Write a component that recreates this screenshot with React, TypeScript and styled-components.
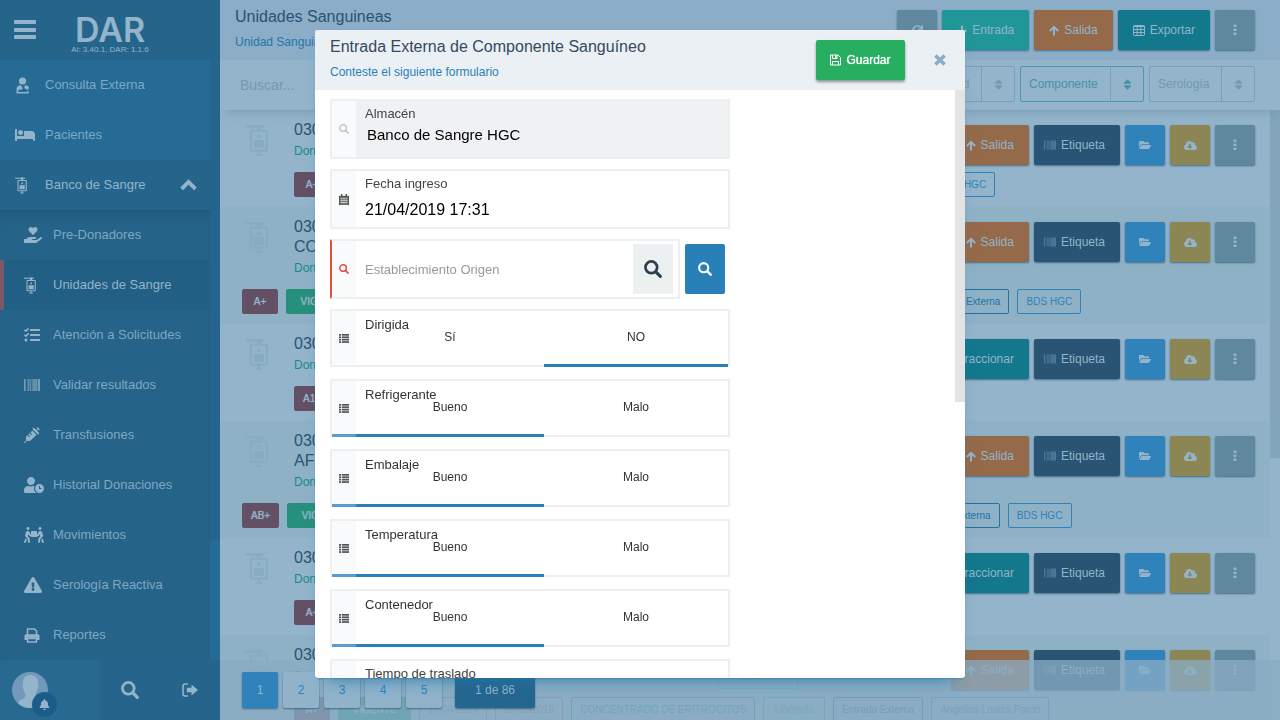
import React from "react";
import styled, { createGlobalStyle, css } from "styled-components";
import {
  FaBarcode,
  FaBed,
  FaBell,
  FaCloudDownloadAlt,
  FaExclamationTriangle,
  FaFolderOpen,
  FaHandHoldingHeart,
  FaPeopleCarry,
  FaRedo,
  FaSort,
  FaSyringe,
  FaTasks,
  FaUserClock,
} from "react-icons/fa";

const color = {
  bright: "#93b4ca",
  dim: "#7ea8c4",
  side: "#26658b",
  menu: "#256b96",
  submenu: "#256388",
  active: "#225f84",
  header: "#8badc7",
  rowEven: "#8eb1c6",
  navy: "#295473",
  blue: "#2f82ba",
  orange: "#956a4a",
  teal: "#13788c",
  turquoise: "#209699",
  gold: "#8c8554",
  slate: "#5f889f",
  wine: "#635064",
  green: "#27907c",
  field: "#ecf0f1",
  primary: "#2980b9",
};

const GlobalStyle = createGlobalStyle`
  *, *::before, *::after { box-sizing: border-box; }
  body { margin: 0; overflow: hidden; background: ${color.bright}; }
  body, button, input, select {
    font-family: "Liberation Sans", Arial, sans-serif;
  }
  button { border: 0; padding: 0; cursor: pointer; }
  h1, h2, p { margin: 0; font-weight: 400; }
  a { text-decoration: none; color: inherit; }
  svg { display: block; flex: none; }
`;

/* ---------- drawn icons ---------- */

const BarsIcon = () => (
  <svg width="24" height="20" viewBox="0 0 24 20" fill="currentColor">
    <rect x="1" y="0" width="22" height="4" rx="1" />
    <rect x="1" y="8" width="22" height="4" rx="1" />
    <rect x="1" y="15" width="22" height="4" rx="1" />
  </svg>
);

const SearchIcon = ({ size }: { size: number }) => (
  <svg width={size} height={size} viewBox="0 0 16 16" fill="none" stroke="currentColor">
    <circle cx="6.500" cy="6.500" r="5.200" strokeWidth="2.400" />
    <path d="M10.800 10.800L14.500 14.500" strokeWidth="2.800" strokeLinecap="round" />
  </svg>
);

const ArrowIcon = ({ down }: { down?: boolean }) => (
  <svg width="10" height="11" viewBox="0 0 10 11" fill="none" stroke="currentColor" strokeWidth="2">
    {down ? <path d="M5 0.500V9M0.800 5L5 9.200L9.200 5" /> : <path d="M5 10.500V2M0.800 6L5 1.800L9.200 6" />}
  </svg>
);

const ChevronIcon = () => (
  <svg width="17" height="12" viewBox="0 0 17 12" fill="none" stroke="currentColor" strokeWidth="3.800">
    <path d="M1.600 9.800L8.500 3L15.400 9.800" />
  </svg>
);

const CloseIcon = () => (
  <svg width="12" height="12" viewBox="0 0 12 12" stroke="currentColor" strokeWidth="3.600">
    <path d="M1.400 1.400L10.600 10.600M10.600 1.400L1.400 10.600" />
  </svg>
);

const PrintIcon = () => (
  <svg width="16" height="15" viewBox="0 0 16 15">
    <g fill="none" stroke="currentColor" strokeWidth="1.500">
      <path d="M3.500 7V1H10.500L12.500 3V7" />
      <path d="M3.500 10.500H12.500V14H3.500Z" />
    </g>
    <path
      fill="currentColor"
      d="M2 6.200H14Q15.500 6.200 15.500 7.700V12H12.500V9.700H3.500V12H0.500V7.700Q0.500 6.200 2 6.200Z"
    />
  </svg>
);

const DoctorIcon = () => (
  <svg width="16" height="17" viewBox="0 0 16 17" fill="currentColor">
    <circle cx="7.500" cy="4" r="3.600" />
    <path d="M4.500 8.200C2.600 8.800 1.500 10.400 1.500 12.500V16.500H13.500V13.500L11.500 15H3.300V12.800H6.200L8 11.200L5.800 8.600Z" />
    <path d="M9.500 8.600H11.200C13 8.600 14 9.800 14 11.400L12.200 12.800L9.500 11.200Z" />
  </svg>
);

const BagIcon = ({ size = 17 }: { size?: number }) => (
  <svg width={(size * 24) / 34} height={size} viewBox="0 0 24 34">
    <g fill="none" stroke="currentColor" strokeWidth="2.200">
      <path d="M0 2.500H20" />
      <rect x="6" y="7" width="16.500" height="20.500" rx="1" />
      <path d="M14.200 28V32M10.800 32H17.600" />
    </g>
    <path fill="currentColor" d="M9 16.500H19.500V24.500H9ZM12.600 11H15.900V14.500H12.600ZM12 1H16.500V6H12Z" />
  </svg>
);

const SignOutIcon = () => (
  <svg width="16" height="14" viewBox="0 0 16 14">
    <path d="M6 1H3.200Q1 1 1 3.200V10.800Q1 13 3.200 13H6" fill="none" stroke="currentColor" strokeWidth="1.600" />
    <path d="M4.800 4.700H9.500V1.500L16 7L9.500 12.500V9.300H4.800Z" fill="currentColor" />
  </svg>
);

const TableIcon = () => (
  <svg width="12" height="11" viewBox="0 0 12 11" fill="none" stroke="currentColor">
    <rect x="0.500" y="0.500" width="11" height="10" rx="1" />
    <path d="M0 1.500H12M0 4.500H12M0 7.500H12M4.200 1V10.500M7.800 1V10.500" />
  </svg>
);

const DotsIcon = () => (
  <svg width="4" height="12" viewBox="0 0 4 12" fill="currentColor">
    <rect x="0.500" y="0.500" width="3" height="2.600" rx="0.500" />
    <rect x="0.500" y="4.500" width="3" height="2.600" rx="0.500" />
    <rect x="0.500" y="8.500" width="3" height="2.600" rx="0.500" />
  </svg>
);

const SaveIcon = () => (
  <svg width="11" height="12" viewBox="0 0 11 12" fill="none" stroke="currentColor">
    <path d="M0.500 1H8L10.500 3.500V11H0.500Z" />
    <path d="M2.500 1V4.500H7V1M2.500 11V7.500H8.500V11" />
    <path d="M5 1.500H6.500V4H5Z" fill="currentColor" stroke="none" />
  </svg>
);

const CalendarIcon = () => (
  <svg width="10" height="11" viewBox="0 0 11 12">
    <path fill="currentColor" d="M0 2H11V12H0Z" />
    <path stroke="currentColor" strokeWidth="1.600" d="M3 0V3M8 0V3" />
    <path
      stroke="#f8fafc"
      strokeWidth="0.600"
      d="M1 4.500H10M1 7H10M1 9.300H10M3.200 4.500V11.300M5.500 4.500V11.300M7.800 4.500V11.300"
    />
  </svg>
);

const ListIcon = () => (
  <svg width="10" height="9" viewBox="0 0 10 9" fill="currentColor">
    {[0, 2.4, 4.8, 7.2].map((y) => (
      <React.Fragment key={y}>
        <rect x="0" y={y} width="2" height="1.700" />
        <rect x="2.800" y={y} width="7.200" height="1.700" />
      </React.Fragment>
    ))}
  </svg>
);

const AvatarIcon = () => (
  <svg width="36" height="36" viewBox="0 0 36 36">
    <circle cx="18" cy="18" r="18" fill="#7399ba" />
    <path
      fill={color.bright}
      d="M18.500 3C13.500 3 10.800 6.300 11 11C11 13 10 14 11.200 16.500C11.800 19.500 13 20.500 13.500 22.500C13.500 26 12 26.500 8.500 28C6.500 29 6 31 6 31.500A18 18 0 0 0 30 31.500C29.500 28.500 27 28 25 27C23 26 23 24 23.500 22C25 20 25.200 18 25.800 16.500C27 14 26 13 26 11C26.200 6.300 23.500 3 18.500 3Z"
    />
  </svg>
);

/* ---------- page frame ---------- */

const Page = styled.div`
  display: grid;
  grid-template-columns: 220px minmax(0, 1fr);
  grid-template-rows: minmax(0, 1fr);
  height: 100vh;
`;

/* ---------- sidebar ---------- */

const Sidebar = styled.aside`
  display: flex;
  flex-direction: column;
  min-height: 0;
  background: ${color.side};
  color: ${color.bright};
`;

const Brand = styled.div`
  display: grid;
  grid-template-columns: 60px 100px 1fr;
  height: 60px;
  flex: none;
`;

const MenuButton = styled.button`
  background: none;
  color: inherit;
  padding: 20px 0 0 13px;
  display: flex;
  align-items: flex-start;
`;

const Logo = styled.div`
  padding-top: 14px;
  text-align: center;
`;

const LogoName = styled.div`
  font-family: Inter, "Liberation Sans", sans-serif;
  font-size: 34px;
  font-weight: 600;
  line-height: 32px;
`;

const LogoVersion = styled.div`
  font-size: 8px;
  line-height: 8px;
  white-space: nowrap;
`;

const NavArea = styled.div`
  flex: 1;
  min-height: 0;
  display: grid;
  grid-template-columns: minmax(0, 1fr) 10px;
  grid-template-rows: minmax(0, 1fr);
  overflow: hidden;
`;

const NavTrack = styled.div`
  background: ${color.menu};
`;

const NavThumb = styled.div`
  height: 80%;
  background: ${color.side};
`;

const Nav = styled.nav`
  background: ${color.menu};
`;

const NavLink = styled.a<{ $open?: boolean }>`
  display: flex;
  align-items: center;
  height: 50px;
  padding: 0 13px;
  font-size: 13px;
  color: ${(p) => (p.$open ? color.bright : color.dim)};
  background: ${(p) => (p.$open ? color.side : "transparent")};
`;

const NavIcon = styled.span`
  width: 32px;
  padding-left: 2px;
  color: ${color.bright};
`;

const NavText = styled.span`
  flex: 1;
  padding-bottom: 2px;
`;

const SubMenu = styled.div`
  background: ${color.submenu};
  box-shadow: inset 0 14px 14px -14px #1f5070;
`;

const SubLink = styled(NavLink)<{ $active?: boolean }>`
  padding: 0 13px 0 20px;
  border-left: 4px solid ${(p) => (p.$active ? "#7a5868" : "transparent")};
  background: ${(p) => (p.$active ? color.active : "transparent")};
  color: ${(p) => (p.$active ? color.bright : color.dim)};
`;

const SubIcon = styled.span`
  width: 29px;
  color: ${color.bright};
`;

const UserBar = styled.div`
  display: grid;
  grid-template-columns: 100px 60px 60px;
  height: 60px;
  flex: none;
`;

const UserButton = styled.button`
  position: relative;
  background: #28698f;
  padding: 0 12px;
`;

const BellBadge = styled.span`
  position: absolute;
  left: 32px;
  top: 32px;
  display: grid;
  place-items: center;
  width: 25px;
  height: 25px;
  border-radius: 50%;
  background: #1b5c88;
  color: ${color.bright};
`;

const UserAction = styled.button`
  display: grid;
  place-items: center;
  background: none;
  color: ${color.bright};
`;

/* ---------- content ---------- */

const Content = styled.main`
  position: relative;
  display: flex;
  flex-direction: column;
  min-height: 0;
  overflow: hidden;
  background: ${color.bright};
`;

const PageHeader = styled.header`
  display: flex;
  justify-content: space-between;
  height: 60px;
  flex: none;
  padding: 0 25px 0 15px;
  background: ${color.header};
`;

const HeaderTitle = styled.h1`
  padding-top: 6px;
  font-size: 16px;
  line-height: 22px;
  color: ${color.navy};
`;

const HeaderSub = styled.p`
  padding-top: 5px;
  font-size: 12px;
  line-height: 18px;
  color: #2277aa;
`;

const Actions = styled.div<{ $top?: number }>`
  display: flex;
  justify-content: flex-end;
  align-items: flex-start;
  gap: 5px;
  padding-top: ${(p) => p.$top ?? 10}px;
`;

const Button = styled.button<{ $bg: string }>`
  display: flex;
  align-items: center;
  justify-content: center;
  gap: 5px;
  min-width: 40px;
  height: 40px;
  padding: 0 15px;
  border-radius: 2px;
  font-size: 12px;
  color: ${color.bright};
  background: ${(p) => p.$bg};
  box-shadow: 0 1px 2px rgba(40, 80, 110, 0.7);
`;

const LabelButton = styled(Button)`
  padding-left: 10px;
`;

const IconButton = styled(Button)`
  width: 40px;
  padding: 0;
`;

const FilterBar = styled.div`
  display: flex;
  align-items: flex-start;
  gap: 5px;
  height: 50px;
  flex: none;
  padding: 6px 25px 0 20px;
  box-shadow: 0 6px 10px -6px rgba(70, 115, 145, 0.5);
  z-index: 1;
`;

const SearchInput = styled.input`
  flex: 1;
  min-width: 0;
  height: 38px;
  padding: 0;
  border: 0;
  outline: 0;
  background: transparent;
  font-size: 14px;
  color: ${color.navy};
  &::placeholder {
    color: #7599af;
    opacity: 1;
  }
`;

const SelectBox = styled.div<{ $on?: boolean; $width: number }>`
  display: flex;
  width: ${(p) => p.$width}px;
  height: 36px;
  border: 1px solid ${(p) => (p.$on ? "#4b9aae" : "#78a0b6")};
  border-radius: 2px;
  color: ${(p) => (p.$on ? "#4593a8" : "#7299af")};
`;

const Select = styled.select`
  flex: 1;
  min-width: 0;
  padding: 0 0 0 8px;
  appearance: none;
  border: 0;
  outline: 0;
  background: transparent;
  font-size: 12px;
  color: inherit;
`;

const SelectArrow = styled.span`
  display: grid;
  place-items: center;
  width: 33px;
  border-left: 1px solid #78a0b6;
`;

const ListArea = styled.div`
  flex: 1;
  min-height: 0;
  display: grid;
  grid-template-columns: minmax(0, 1fr) 10px;
  grid-template-rows: minmax(0, 1fr);
  overflow: hidden;
`;

const ListThumb = styled.div`
  height: 57%;
  background: #83a5bb;
`;

const Rows = styled.div`
  min-width: 0;
`;

const Row = styled.article<{ $even: boolean }>`
  padding: 10px 15px 10px 22px;
  background: ${(p) => (p.$even ? color.rowEven : color.bright)};
`;

const RowTop = styled.div`
  display: grid;
  grid-template-columns: 52px minmax(0, 1fr) 80px 457px;
`;

const RowIcon = styled.div`
  padding: 4px 0 0 3px;
  color: #87abc1;
`;

const RowHeading = styled.div`
  padding-bottom: 3px;
`;

const RowTitle = styled.h2`
  font-size: 16px;
  line-height: 20px;
  color: ${color.navy};
  white-space: pre-line;
`;

const RowSub = styled.p`
  font-size: 12px;
  line-height: 22px;
  color: #17898f;
`;

const Amount = styled.div`
  height: 25px;
  margin-top: 19px;
  border: 1px solid #6b93b2;
  border-radius: 2px;
  font-size: 12px;
  line-height: 23px;
  text-align: center;
  color: #5d8aad;
`;

const Tags = styled.div<{ $indent: boolean }>`
  display: flex;
  gap: 8px;
  margin-top: 7px;
  padding-left: ${(p) => (p.$indent ? 52 : 0)}px;
`;

const Tag = styled.span<{ $tone: string; $fill?: boolean; $min?: number }>`
  flex: none;
  min-width: ${(p) => p.$min ?? 36}px;
  height: 25px;
  padding: 0 8px;
  border: 1px solid ${(p) => p.$tone};
  border-radius: 2px;
  font-size: 10px;
  line-height: 23px;
  text-align: center;
  white-space: nowrap;
  color: ${(p) => (p.$fill ? color.bright : p.$tone)};
  background: ${(p) => (p.$fill ? p.$tone : "transparent")};
  text-shadow: ${(p) => (p.$fill ? `0 0 1px ${color.bright}` : "none")};
`;

const Pager = styled.nav`
  position: absolute;
  left: 0;
  right: 0;
  bottom: 0;
  z-index: 2;
  display: flex;
  gap: 5px;
  height: 60px;
  padding: 12px 22px;
  background: rgba(138, 172, 196, 0.76);
`;

const PageButton = styled.button<{ $current?: boolean }>`
  width: 36px;
  height: 36px;
  border-radius: 2px;
  font-size: 12px;
  color: ${(p) => (p.$current ? color.bright : color.blue)};
  background: ${(p) => (p.$current ? color.blue : "#90b3ca")};
  box-shadow: 0 1px 2px rgba(40, 80, 110, 0.7);
`;

const PageStatus = styled.span`
  width: 80px;
  height: 36px;
  margin-left: 8px;
  border-radius: 2px;
  font-size: 12px;
  line-height: 36px;
  text-align: center;
  color: ${color.bright};
  background: #25668f;
  box-shadow: 0 1px 2px rgba(40, 80, 110, 0.7);
`;

/* ---------- dialog ---------- */

const Overlay = styled.div`
  position: fixed;
  inset: 0;
  z-index: 10;
  display: flex;
  justify-content: center;
  align-items: flex-start;
  padding-top: 30px;
`;

const Dialog = styled.section`
  display: flex;
  flex-direction: column;
  width: 100%;
  max-width: 650px;
  height: 90vh;
  border-radius: 3px;
  overflow: hidden;
  background: #fff;
  box-shadow: 0 12px 16px -12px #2277a6, 0 1px 1px rgba(60, 110, 150, 0.4);
`;

const DialogHeader = styled.header`
  display: flex;
  height: 60px;
  flex: none;
  padding: 0 10px 0 15px;
  background: #ebf0f5;
`;

const DialogHeading = styled.div`
  flex: 1;
`;

const DialogTitle = styled(HeaderTitle)`
  color: #34495e;
`;

const DialogSub = styled(HeaderSub)`
  color: ${color.primary};
`;

const SaveButton = styled(Button)`
  width: 89px;
  margin: 10px 20px 0 0;
  color: #fff;
  text-shadow: 0 0 1px #fff;
  box-shadow: 0 2px 3px rgba(0, 0, 0, 0.4);
`;

const CloseButton = styled.button`
  width: 30px;
  display: grid;
  place-items: center;
  background: none;
  color: #8aaeca;
`;

const DialogBody = styled.div`
  flex: 1;
  min-height: 0;
  display: grid;
  grid-template-columns: minmax(0, 1fr) 10px;
  grid-template-rows: minmax(0, 1fr);
  overflow: hidden;
`;

const DialogThumb = styled.div`
  height: 53%;
  background: #e3e3e3;
`;

const Form = styled.form`
  display: flex;
  flex-direction: column;
  gap: 10px;
  padding: 9px 15px;
`;

const Line = styled.div`
  display: flex;
  align-items: flex-start;
  gap: 5px;
  width: 100%;
  max-width: 400px;
  height: 60px;
  flex: none;
`;

const Field = styled.div<{ $locked?: boolean; $error?: boolean }>`
  flex: 1;
  display: flex;
  height: 60px;
  border: 2px solid ${color.field};
  ${(p) =>
    p.$error &&
    css`
      border-left-color: #e74c3c;
    `}
  background: ${(p) => (p.$locked ? "#f0f1f3" : "#fff")};
`;

const FieldIcon = styled.span<{ $tone?: string }>`
  display: grid;
  place-items: center;
  width: 24px;
  flex: none;
  background: #f8fafc;
  color: ${(p) => p.$tone ?? "#555"};
`;

const FieldMain = styled.div`
  flex: 1;
  min-width: 0;
  display: flex;
  flex-direction: column;
  padding: 3px 9px 0;
`;

const FieldLabel = styled.label`
  font-size: 13px;
  line-height: 20px;
  color: #444;
`;

const FieldInput = styled.input<{ $size?: number }>`
  width: 100%;
  height: ${(p) => (p.$size === 16 ? 32 : 20)}px;
  padding: 0;
  border: 0;
  outline: 0;
  background: transparent;
  font-size: ${(p) => p.$size ?? 15}px;
  color: #000;
`;

const LockedInput = styled(FieldInput)`
  padding-left: 2px;
`;

const LookupInput = styled(FieldInput)`
  flex: 1;
  min-width: 0;
  height: 56px;
  padding-left: 9px;
  &::placeholder {
    color: #999;
    opacity: 1;
  }
`;

const LookupButton = styled.button<{ $primary?: boolean }>`
  display: grid;
  place-items: center;
  width: 40px;
  height: 50px;
  flex: none;
  margin: ${(p) => (p.$primary ? "5px 5px 0 0" : "3px 5px 0 0")};
  border-radius: ${(p) => (p.$primary ? 2 : 0)}px;
  background: ${(p) => (p.$primary ? color.primary : color.field)};
  color: ${(p) => (p.$primary ? "#fff" : "#2c3e50")};
`;

const ChoiceSet = styled.fieldset`
  position: relative;
  flex: 1;
  display: grid;
  grid-template-columns: 24px 188px minmax(0, 1fr);
  height: 58px;
  min-width: 0;
  margin: 0;
  padding: 0;
  border: 2px solid ${color.field};
`;

const ChoiceName = styled.legend`
  position: absolute;
  left: 33px;
  top: 4px;
  padding: 0;
  font-size: 13px;
  line-height: 20px;
  color: #333;
`;

const ChoiceIcon = styled(FieldIcon)<{ $marked: boolean }>`
  height: 56px;
  padding-top: 2px;
  border-bottom: 3px solid ${(p) => (p.$marked ? "#5b9bcd" : "transparent")};
  background-clip: padding-box;
`;

const Choice = styled.label`
  height: 56px;
  padding-top: 17px;
  font-size: 12px;
  line-height: 18px;
  text-align: center;
  color: #333;
  border-bottom: 3px solid transparent;
  &:has(input:checked) {
    border-bottom-color: ${color.primary};
  }
`;

const HiddenRadio = styled.input`
  position: absolute;
  opacity: 0;
  margin: 0;
`;

/* ---------- data ---------- */

const submenu = [
  { text: "Pre-Donadores", icon: <FaHandHoldingHeart size={18} /> },
  { text: "Unidades de Sangre", icon: <BagIcon />, active: true },
  { text: "Atención a Solicitudes", icon: <FaTasks size={16} /> },
  { text: "Validar resultados", icon: <FaBarcode size={16} /> },
  { text: "Transfusiones", icon: <FaSyringe size={16} /> },
  { text: "Historial Donaciones", icon: <FaUserClock size={20} /> },
  { text: "Movimientos", icon: <FaPeopleCarry size={20} /> },
  { text: "Serología Reactiva", icon: <FaExclamationTriangle size={18} /> },
  { text: "Reportes", icon: <PrintIcon /> },
];

type Unit = {
  group: string;
  title: string;
  wide?: boolean;
  split?: boolean;
  product: string;
  productWidth?: number;
  last: string;
};

const units: Unit[] = [
  { group: "A+", title: "030190000412", product: "CONCENTRADO DE ERITROCITOS", last: "BDS HGC" },
  {
    group: "A+",
    title: "030190000411\nCONCENTRADO DE ERITROCITOS",
    wide: true,
    product: "CONCENTRADO DE ERITROCITOS LEUCORREDUCIDO",
    productWidth: 322,
    last: "BDS HGC",
  },
  { group: "A1+", title: "030190000410", split: true, product: "SANGRE TOTAL", last: "" },
  {
    group: "AB+",
    title: "030190000409\nAFERESIS DE PLAQUETAS",
    wide: true,
    product: "AFERESIS DE PLAQUETAS LEUCORREDUCIDA",
    productWidth: 311,
    last: "BDS HGC",
  },
  { group: "A+", title: "030190000408", split: true, product: "SANGRE TOTAL", last: "" },
  { group: "A+", title: "030190000407", product: "CONCENTRADO DE ERITROCITOS", last: "Angelica Loaiza Pardo" },
];

const choices = [
  { name: "Dirigida", options: ["Sí", "NO"], picked: 1 },
  { name: "Refrigerante", options: ["Bueno", "Malo"], picked: 0 },
  { name: "Embalaje", options: ["Bueno", "Malo"], picked: 0 },
  { name: "Temperatura", options: ["Bueno", "Malo"], picked: 0 },
  { name: "Contenedor", options: ["Bueno", "Malo"], picked: 0 },
];

/* ---------- components ---------- */

const Filter = ({ label, width, on }: { label: string; width: number; on?: boolean }) => (
  <SelectBox $width={width} $on={on}>
    <Select aria-label={label}>
      <option>{label}</option>
    </Select>
    <SelectArrow>
      <FaSort size={13} />
    </SelectArrow>
  </SelectBox>
);

const UnitRow = ({ unit, even }: { unit: Unit; even: boolean }) => (
  <Row $even={even}>
    <RowTop>
      <RowIcon>
        <BagIcon size={33} />
      </RowIcon>
      <RowHeading>
        <RowTitle>{unit.title}</RowTitle>
        <RowSub>Donador</RowSub>
      </RowHeading>
      <Amount>280 ml</Amount>
      <Actions $top={5}>
        {unit.split ? (
          <Button $bg={color.teal}>Fraccionar</Button>
        ) : (
          <Button $bg={color.orange}>
            <ArrowIcon /> Salida
          </Button>
        )}
        <LabelButton $bg={color.navy}>
          <FaBarcode size={12} opacity={0.6} /> Etiqueta
        </LabelButton>
        <IconButton $bg={color.blue} aria-label="Abrir">
          <FaFolderOpen size={12} />
        </IconButton>
        <IconButton $bg={color.gold} aria-label="Descargar">
          <FaCloudDownloadAlt size={13} />
        </IconButton>
        <IconButton $bg={color.slate} aria-label="Más">
          <DotsIcon />
        </IconButton>
      </Actions>
    </RowTop>
    <Tags $indent={!unit.wide}>
      <Tag $tone={color.wine} $fill>{unit.group}</Tag>
      <Tag $tone={color.green} $fill $min={73}>VIGENTE</Tag>
      {!unit.split && (
        <>
          <Tag $tone="#5c7fb5">17/04/2019</Tag>
          <Tag $tone="#7c6f8e">29/05/2019</Tag>
          <Tag $tone="#25839a" $min={unit.productWidth}>{unit.product}</Tag>
          <Tag $tone="#2f9d9c" $min={62}>Liberada</Tag>
          <Tag $tone="#2472a3">Entrada Externa</Tag>
          <Tag $tone={color.blue} $min={64}>{unit.last}</Tag>
        </>
      )}
    </Tags>
  </Row>
);

const ChoiceField = ({ name, options, picked }: { name: string; options: string[]; picked: number }) => (
  <Line>
    <ChoiceSet>
      <ChoiceName>{name}</ChoiceName>
      <ChoiceIcon $marked={picked === 0}>
        <ListIcon />
      </ChoiceIcon>
      {options.map((option, i) => (
        <Choice key={option}>
          <HiddenRadio type="radio" name={name} defaultChecked={i === picked} />
          {option}
        </Choice>
      ))}
    </ChoiceSet>
  </Line>
);

const EntryDialog = () => (
  <Overlay>
    <Dialog role="dialog" aria-labelledby="dialog-title">
      <DialogHeader>
        <DialogHeading>
          <DialogTitle as="h2" id="dialog-title">Entrada Externa de Componente Sanguíneo</DialogTitle>
          <DialogSub>Conteste el siguiente formulario</DialogSub>
        </DialogHeading>
        <SaveButton $bg="#27ae60">
          <SaveIcon /> Guardar
        </SaveButton>
        <CloseButton aria-label="Cerrar">
          <CloseIcon />
        </CloseButton>
      </DialogHeader>
      <DialogBody>
        <Form>
          <Line>
            <Field $locked>
              <FieldIcon $tone="#c4c6c8">
                <SearchIcon size={10} />
              </FieldIcon>
              <FieldMain>
                <FieldLabel htmlFor="almacen">Almacén</FieldLabel>
                <LockedInput id="almacen" readOnly defaultValue="Banco de Sangre HGC" />
              </FieldMain>
            </Field>
          </Line>
          <Line>
            <Field>
              <FieldIcon>
                <CalendarIcon />
              </FieldIcon>
              <FieldMain>
                <FieldLabel htmlFor="fecha">Fecha ingreso</FieldLabel>
                <FieldInput id="fecha" $size={16} defaultValue="21/04/2019 17:31" />
              </FieldMain>
            </Field>
          </Line>
          <Line>
            <Field $error>
              <FieldIcon $tone="#e74c3c">
                <SearchIcon size={10} />
              </FieldIcon>
              <LookupInput $size={13} placeholder="Establecimiento Origen" aria-label="Establecimiento Origen" />
              <LookupButton type="button" aria-label="Buscar">
                <SearchIcon size={18} />
              </LookupButton>
            </Field>
            <LookupButton type="button" $primary aria-label="Buscar establecimiento">
              <SearchIcon size={14} />
            </LookupButton>
          </Line>
          {choices.map((c) => (
            <ChoiceField key={c.name} {...c} />
          ))}
          <Line>
            <Field>
              <FieldIcon />
              <FieldMain>
                <FieldLabel htmlFor="tiempo">Tiempo de traslado</FieldLabel>
                <FieldInput id="tiempo" />
              </FieldMain>
            </Field>
          </Line>
        </Form>
        <DialogThumb />
      </DialogBody>
    </Dialog>
  </Overlay>
);

export default function App() {
  return (
    <>
      <GlobalStyle />
      <Page>
        <Sidebar>
          <Brand>
            <MenuButton aria-label="Menú">
              <BarsIcon />
            </MenuButton>
            <Logo>
              <LogoName>DAR</LogoName>
              <LogoVersion>Ai: 3.40.1, DAR: 1.1.6</LogoVersion>
            </Logo>
          </Brand>
          <NavArea>
            <Nav>
              <NavLink href="#consulta">
                <NavIcon><DoctorIcon /></NavIcon>
                <NavText>Consulta Externa</NavText>
              </NavLink>
              <NavLink href="#pacientes">
                <NavIcon><FaBed size={20} /></NavIcon>
                <NavText>Pacientes</NavText>
              </NavLink>
              <NavLink href="#banco" $open>
                <NavIcon><BagIcon /></NavIcon>
                <NavText>Banco de Sangre</NavText>
                <ChevronIcon />
              </NavLink>
              <SubMenu>
                {submenu.map((item) => (
                  <SubLink key={item.text} href="#unidades" $active={item.active}>
                    <SubIcon>{item.icon}</SubIcon>
                    <NavText>{item.text}</NavText>
                  </SubLink>
                ))}
              </SubMenu>
            </Nav>
            <NavTrack>
              <NavThumb />
            </NavTrack>
          </NavArea>
          <UserBar>
            <UserButton aria-label="Usuario">
              <AvatarIcon />
              <BellBadge>
                <FaBell size={11} />
              </BellBadge>
            </UserButton>
            <UserAction aria-label="Buscar">
              <SearchIcon size={18} />
            </UserAction>
            <UserAction aria-label="Salir">
              <SignOutIcon />
            </UserAction>
          </UserBar>
        </Sidebar>
        <Content>
          <PageHeader>
            <div>
              <HeaderTitle>Unidades Sanguineas</HeaderTitle>
              <HeaderSub>Unidad Sanguinea</HeaderSub>
            </div>
            <Actions>
              <IconButton $bg={color.slate} aria-label="Actualizar">
                <FaRedo size={11} />
              </IconButton>
              <Button $bg={color.turquoise}>
                <ArrowIcon down /> Entrada
              </Button>
              <Button $bg={color.orange}>
                <ArrowIcon /> Salida
              </Button>
              <Button $bg={color.teal}>
                <TableIcon /> Exportar
              </Button>
              <IconButton $bg={color.slate} aria-label="Más">
                <DotsIcon />
              </IconButton>
            </Actions>
          </PageHeader>
          <FilterBar>
            <SearchInput placeholder="Buscar..." aria-label="Buscar" />
            <Filter label="Caducidad" width={112} />
            <Filter label="Componente" width={124} on />
            <Filter label="Serología" width={106} />
          </FilterBar>
          <ListArea>
            <Rows>
              {units.map((unit, i) => (
                <UnitRow key={unit.title} unit={unit} even={i % 2 === 1} />
              ))}
            </Rows>
            <ListThumb />
          </ListArea>
          <Pager aria-label="Páginas">
            {[1, 2, 3, 4, 5].map((n) => (
              <PageButton key={n} $current={n === 1}>{n}</PageButton>
            ))}
            <PageStatus>1 de 86</PageStatus>
          </Pager>
        </Content>
      </Page>
      <EntryDialog />
    </>
  );
}
